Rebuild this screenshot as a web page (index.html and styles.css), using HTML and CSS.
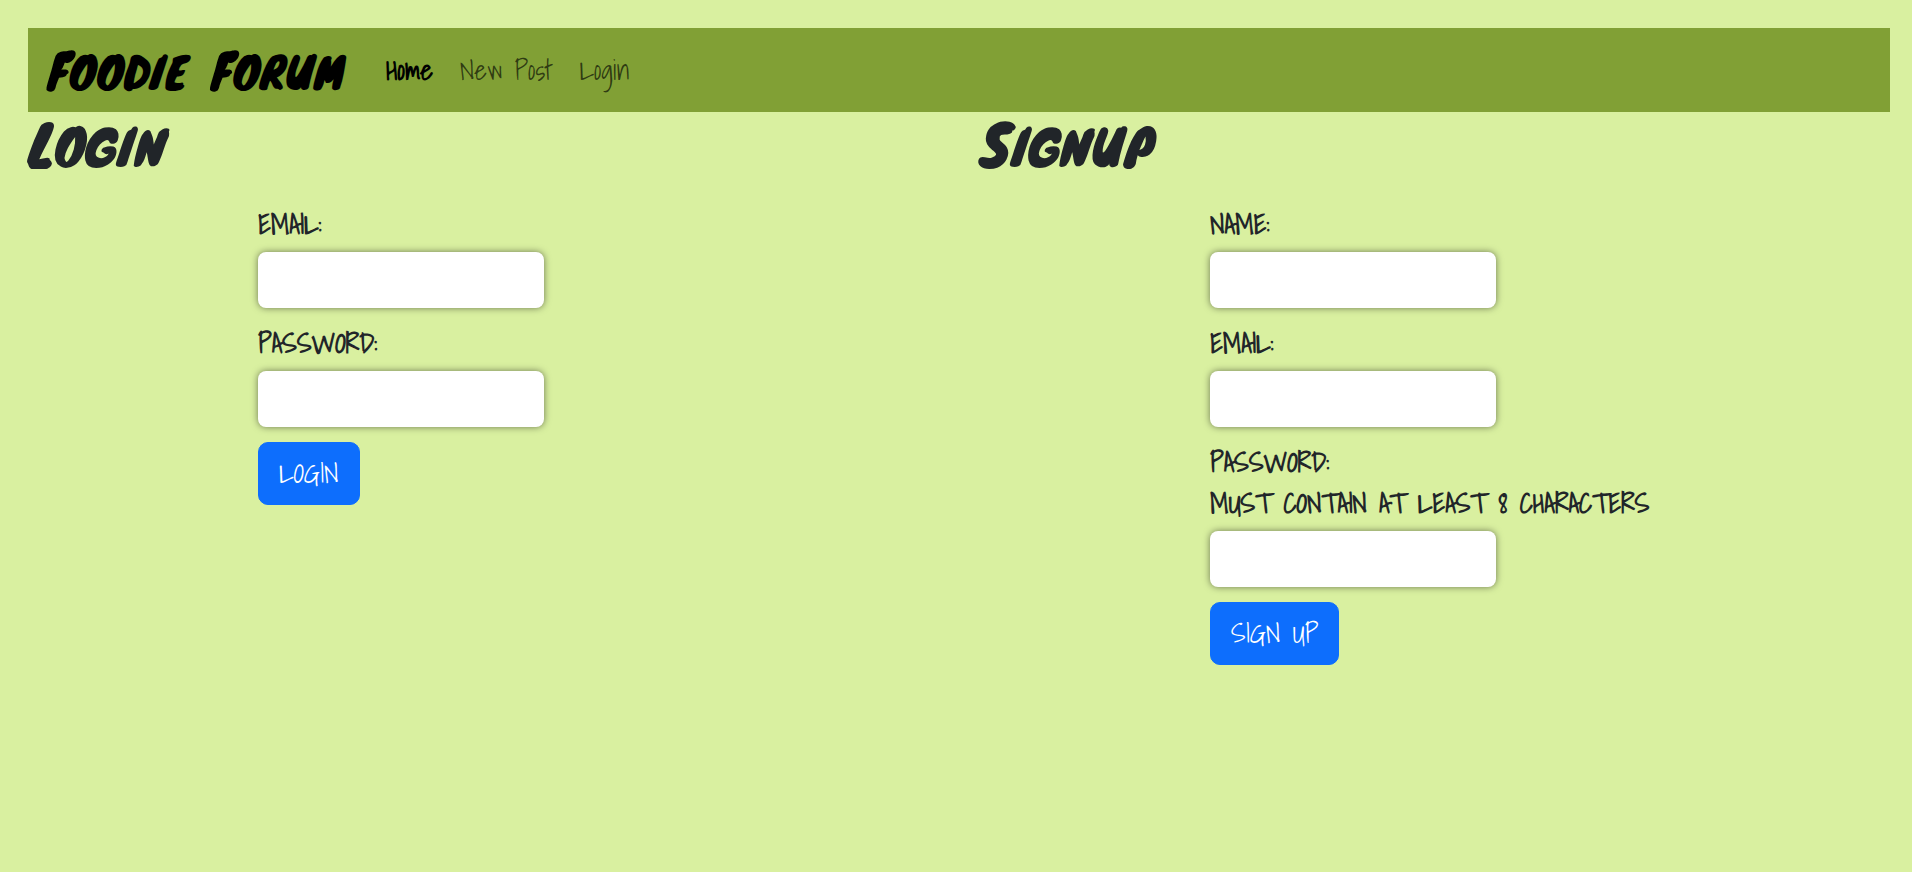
FILE: index.html
```html
<!DOCTYPE html>
<html lang="en">
<head>
<meta charset="utf-8">
<meta name="viewport" content="width=device-width, initial-scale=1">
<title>Foodie Forum</title>
<link rel="stylesheet" href="styles.css">
</head>
<body>
<header class="navbar">
  <a class="brand" href="#"><span class="marker">Foodie</span> <span class="marker">Forum</span></a>
  <nav class="nav">
    <a class="nav-link active" href="#">Home</a>
    <a class="nav-link" href="#">New Post</a>
    <a class="nav-link" href="#">Login</a>
  </nav>
</header>
<main class="row">
  <section class="col">
    <h1 class="title marker">Login</h1>
    <form class="form">
      <label class="label" for="login-email">email:</label>
      <input class="input" id="login-email" type="email">
      <label class="label" for="login-password">password:</label>
      <input class="input" id="login-password" type="password">
      <button class="btn" type="submit">login</button>
    </form>
  </section>
  <section class="col">
    <h1 class="title marker">Signup</h1>
    <form class="form">
      <label class="label" for="signup-name">name:</label>
      <input class="input" id="signup-name" type="text">
      <label class="label" for="signup-email">email:</label>
      <input class="input" id="signup-email" type="email">
      <label class="label" for="signup-password">password:<br>Must contain at least 8 characters</label>
      <input class="input" id="signup-password" type="password">
      <button class="btn" type="submit">sign up</button>
    </form>
  </section>
</main>
</body>
</html>
```
FILE: styles.css
```css
* {
  box-sizing: border-box;
}

body {
  margin: 0;
  min-height: 100vh;
  background: #d9f0a0;
  color: #212529;
  font-family: "Shadows Into Light", "Liberation Sans Narrow", "Open Sans", sans-serif;
  font-size: 27px;
  line-height: 41px;
}

.navbar {
  display: flex;
  align-items: center;
  gap: 42px;
  min-height: 84px;
  margin: 28px 22px 0 28px;
  padding: 0 20px;
  background: #81a035;
}

.brand {
  display: flex;
  gap: 24px;
  color: #000;
  font-size: 43px;
  text-decoration: none;
}

.marker {
  display: block;
  font-family: "Permanent Marker", "Knewave", "Caveat Brush", Lato, sans-serif;
  font-weight: 400;
  text-transform: uppercase;
}

.marker::first-letter {
  font-size: 114%;
}

.nav {
  display: flex;
  gap: 27px;
}

.nav-link {
  color: rgba(0, 0, 0, 0.65);
  text-decoration: none;
}

.nav-link.active {
  color: #000;
  font-weight: 700;
}

.row {
  display: grid;
  grid-template-columns: 1fr 1fr;
  padding-right: 8px;
}

.col {
  padding: 0 4px 28px 28px;
}

.title {
  margin: 0 0 26px;
  font-size: 49px;
  line-height: 64px;
}

.form {
  display: flex;
  flex-direction: column;
  align-items: flex-start;
  margin-left: 25%;
  text-transform: uppercase;
}

.label {
  margin-bottom: 7px;
  font-weight: 700;
}

.input {
  width: 286px;
  height: 56px;
  margin-bottom: 15px;
  padding: 8px 14px;
  border: 0;
  border-radius: 8px;
  background: #fff;
  box-shadow: 0 0 7px rgba(0, 0, 0, 0.5);
  font: inherit;
}

.btn {
  padding: 10px 20px;
  border: 1px solid #0d6efd;
  border-radius: 10px;
  background: #0d6efd;
  color: #fff;
  font: inherit;
  text-transform: inherit;
}
```
